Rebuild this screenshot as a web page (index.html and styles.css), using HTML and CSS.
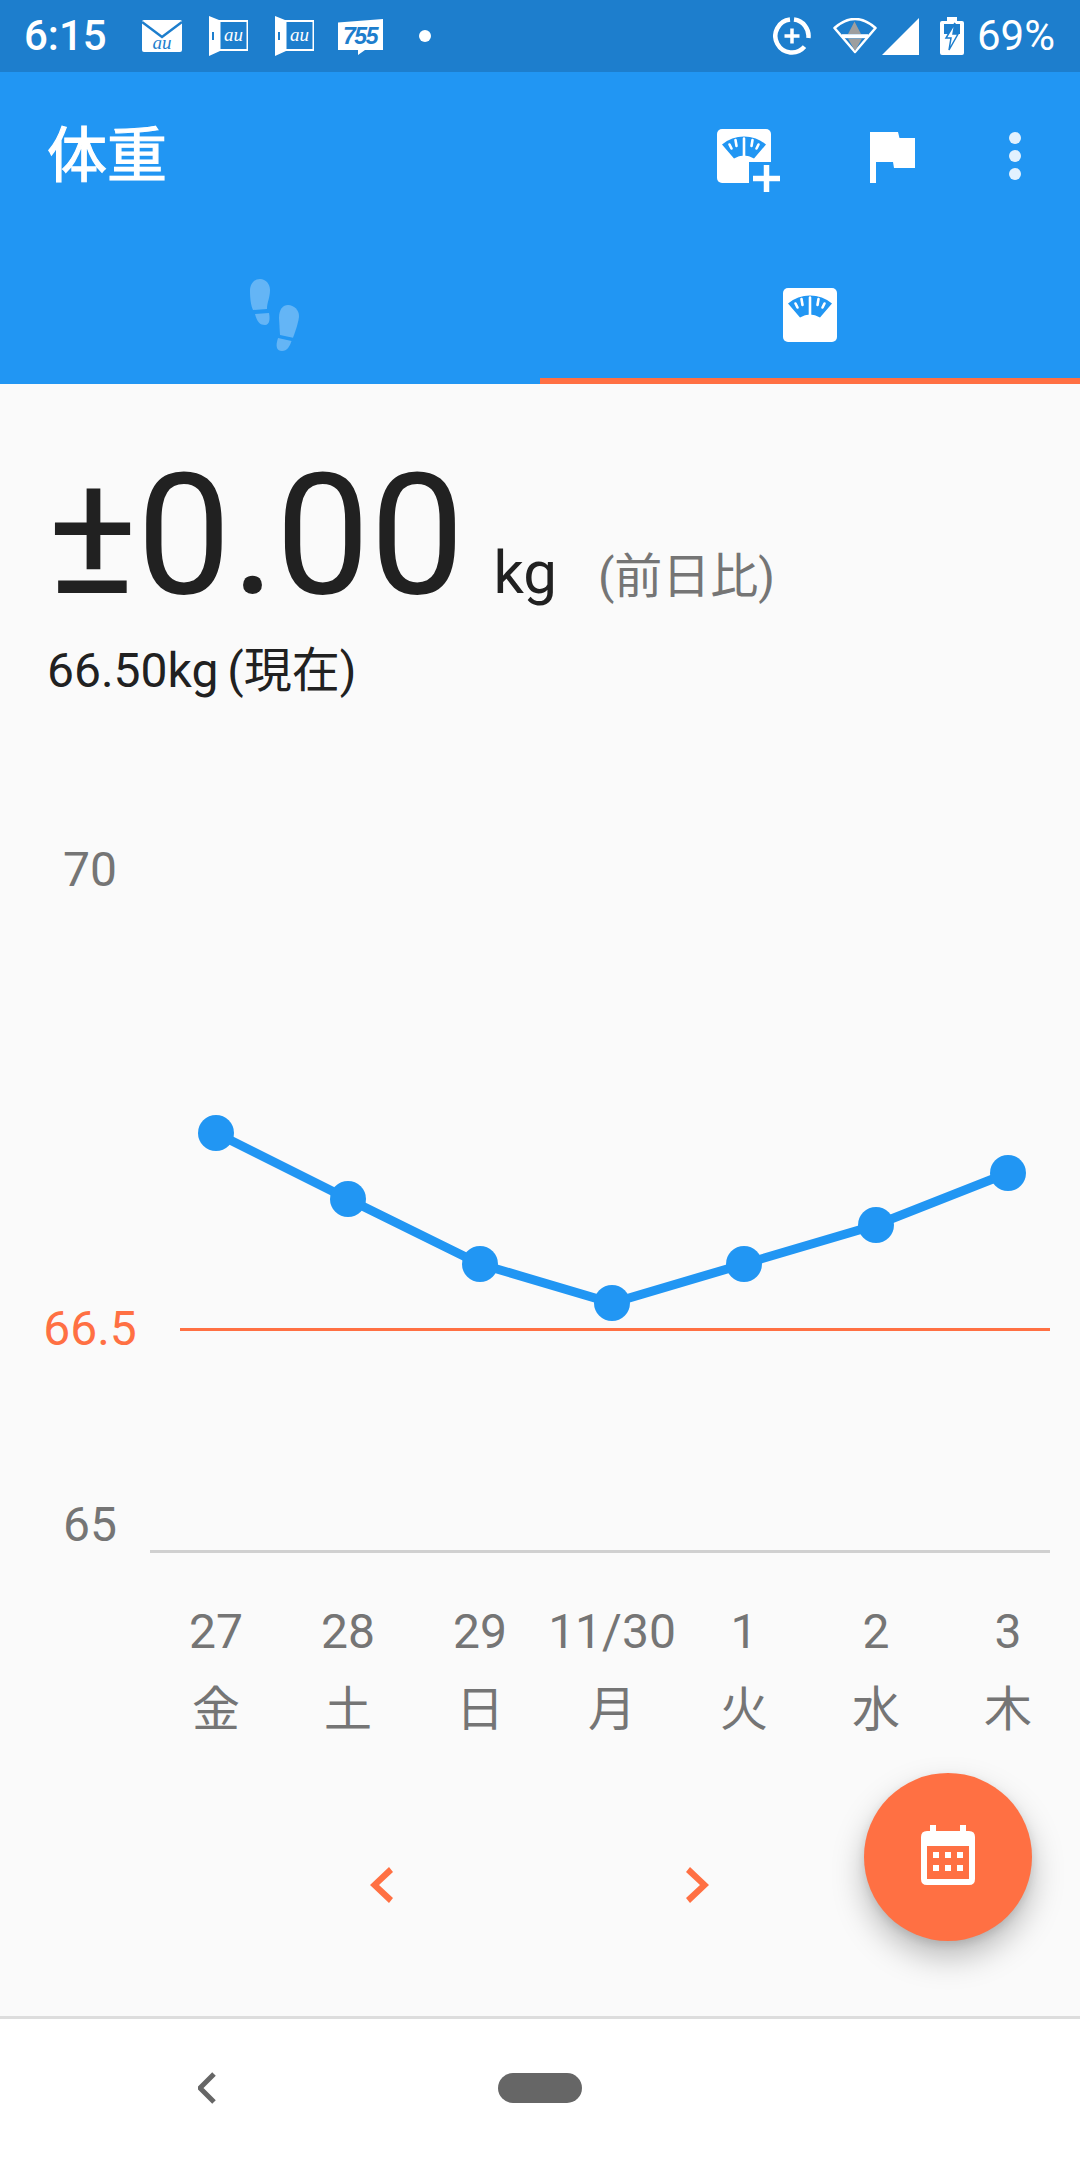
FILE: index.html
```html
<!DOCTYPE html>
<html lang="ja">
<head>
  <meta charset="UTF-8" />
  <meta name="viewport" content="width=device-width, initial-scale=1.0"/>
  <title>体重</title>
  <link rel="stylesheet" href="styles.css">
</head>
<body>
  <svg class="defs" width="0" height="0">
    <symbol id="scale" viewBox="0 0 54 54">
      <rect width="54" height="54" rx="5" fill="#fff"/>
      <path d="M5 15.5 A34 34 0 0 1 49 15.5 L37 29.5 A20 20 0 0 0 17 29.5 Z" fill="#2196f3"/>
      <path d="M27 9.5 V27 M12.5 15.5 L14.5 19.5 M18.5 11 L19.5 17 M41.5 15.5 L39.5 19.5 M35.5 11 L34.5 17" stroke="#fff" stroke-width="2.6" stroke-linecap="round" fill="none"/>
    </symbol>
    <symbol id="door" viewBox="0 0 39 40">
      <path d="M0 0 L10 4 H39 V35 H11 L0 40 Z" fill="#fff"/>
      <rect x="11.5" y="6" width="26" height="27" fill="#1d7ecd"/>
      <rect x="3" y="16" width="2" height="8" fill="#1d7ecd"/>
    </symbol>
  </svg>

  <header class="statusbar">
    <div class="status-group">
      <span class="time">6:15</span>
      <svg class="ic-mail" width="40" height="32" viewBox="0 0 40 32">
        <rect width="40" height="32" rx="2" fill="#fff"/>
        <path d="M0 2 L20 17 L40 2" stroke="#1d7ecd" stroke-width="2.5" fill="none"/>
        <text x="20" y="29" class="au-text" fill="#1d7ecd">au</text>
      </svg>
      <svg class="ic-door" width="39" height="40">
        <use href="#door"/>
        <text x="24.5" y="25" class="au-text" fill="#fff">au</text>
      </svg>
      <svg class="ic-door" width="39" height="40">
        <use href="#door"/>
        <text x="24.5" y="25" class="au-text" fill="#fff">au</text>
      </svg>
      <svg class="ic-755" width="45" height="36" viewBox="0 0 45 36">
        <path d="M0 3.5 L45 0 V31 H27 L20 36 V31 H0 Z" fill="#fff"/>
        <text x="22" y="25" class="num-text" fill="#1d7ecd">755</text>
      </svg>
      <span class="status-dot"></span>
    </div>
    <div class="status-group">
      <svg width="38" height="38" viewBox="0 0 38 38">
        <path d="M21 2.6 A16.5 16.5 0 0 1 35.4 21 M31.5 29.6 A16.5 16.5 0 1 1 17 2.6" stroke="#fff" stroke-width="4.5" fill="none"/>
        <path d="M19 11.5 V26.5 M11.5 19 H26.5" stroke="#fff" stroke-width="3.5" fill="none"/>
      </svg>
      <svg class="ic-wifi" width="44" height="36" viewBox="0 0 44 36">
        <path d="M1.5 10 Q22 -8 42.5 10 L22 34 Z" fill="#1d7ecd" stroke="#fff" stroke-width="2.5" stroke-linejoin="round"/>
        <path d="M21.5 3.5 L15 16 H28 Z M15 20.5 H29 L22 33 Z" fill="#9e9e9e"/>
        <path d="M9 18.2 H35" stroke="#fff" stroke-width="4"/>
      </svg>
      <svg class="ic-signal" width="37" height="37" viewBox="0 0 37 37"><path d="M37 0 V37 H0 Z" fill="#fff"/></svg>
      <svg class="ic-battery" width="24" height="38" viewBox="0 0 24 38">
        <path d="M7 0 H17 V4 H22 Q24 4 24 6 V36 Q24 38 22 38 H2 Q0 38 0 36 V6 Q0 4 2 4 H7 Z" fill="#fff"/>
        <rect x="4" y="7" width="16" height="10" fill="#1d7ecd"/>
        <path d="M15 6 L6 21 H11 L9 33 L18 17 H13 Z" fill="#fff" stroke="#1d7ecd" stroke-width="1.5"/>
      </svg>
      <span class="battery-pct">69%</span>
    </div>
  </header>

  <div class="toolbar">
    <h1 class="title">体重</h1>
    <svg class="act-add" width="63" height="63" viewBox="0 0 63 63">
      <use href="#scale" width="54" height="54"/>
      <rect x="32" y="33" width="31" height="30" fill="#2196f3"/>
      <path d="M36 49.5 H63 M49.5 36 V63" stroke="#fff" stroke-width="5.5" fill="none"/>
    </svg>
    <svg class="act-flag" width="45" height="51" viewBox="0 0 45 51">
      <path d="M0 0 H28 L29.5 6 H45 V36 H24 L23 30 H6 V51 H0 Z" fill="#fff"/>
    </svg>
    <svg class="act-more" width="12" height="48" viewBox="0 0 12 48">
      <circle cx="6" cy="6" r="6"/><circle cx="6" cy="24" r="6"/><circle cx="6" cy="42" r="6"/>
    </svg>
  </div>

  <nav class="tabs">
    <div class="tab">
      <svg class="foot" width="50" height="72" viewBox="250 279 50 72">
        <path d="M260 279 C254 279 250 284 250 291 C250 299 251 306 253 310 L267 309 C267 302 270 298 270 290 C270 284 266 279 260 279 Z"/>
        <path d="M255 314 L269 313 C270 318 270 325 265 325 C260 325 257 322 255 314 Z"/>
        <path d="M288 305 C283 305 279 309 279 318 L280 335 L293 337.7 C296 330 299 320 299 316 C299 310 294 305 288 305 Z"/>
        <path d="M278 338 L291.5 341 C290 346 287 351 282 351 C277 351 275 347 278 338 Z"/>
      </svg>
    </div>
    <div class="tab active">
      <svg width="54" height="54"><use href="#scale"/></svg>
    </div>
  </nav>

  <main class="content">
    <section class="summary">
      <div class="diff-row">
        <span class="diff">±0.00</span>
        <span class="unit">kg</span>
        <span class="diff-note">(前日比)</span>
      </div>
      <p class="current">66.50kg (現在)</p>
    </section>

    <svg class="chart" width="1080" height="830" viewBox="0 740 1080 830">
      <text x="90" y="886" class="axis">70</text>
      <text x="90" y="1345" class="axis now">66.5</text>
      <text x="90" y="1541" class="axis">65</text>
      <line x1="150" y1="1551.5" x2="1050" y2="1551.5" class="base"/>
      <line x1="180" y1="1329.5" x2="1050" y2="1329.5" class="goal"/>
      <polyline class="trend" points="216,1133 348,1199 480,1264 612,1303 744,1264 876,1225 1008,1173"/>
      <g class="pts">
        <circle cx="216" cy="1133" r="18"/>
        <circle cx="348" cy="1199" r="18"/>
        <circle cx="480" cy="1264" r="18"/>
        <circle cx="612" cy="1303" r="18"/>
        <circle cx="744" cy="1264" r="18"/>
        <circle cx="876" cy="1225" r="18"/>
        <circle cx="1008" cy="1173" r="18"/>
      </g>
    </svg>

    <ul class="days">
      <li>27<span>金</span></li>
      <li>28<span>土</span></li>
      <li>29<span>日</span></li>
      <li>11/30<span>月</span></li>
      <li>1<span>火</span></li>
      <li>2<span>水</span></li>
      <li>3<span>木</span></li>
    </ul>

    <div class="pager">
      <svg width="23" height="36" viewBox="0 0 23 36"><path d="M19 0 L23 5 L9 18 L23 31 L19 36 L0 18 Z"/></svg>
      <svg width="23" height="36" viewBox="0 0 23 36"><path d="M4 0 L0 5 L14 18 L0 31 L4 36 L23 18 Z"/></svg>
    </div>
  </main>

  <button class="fab" aria-label="calendar">
    <svg width="54" height="60" viewBox="0 0 54 60">
      <path d="M9 0 H15 V6 H39 V0 H45 V6 H48 Q54 6 54 12 V54 Q54 60 48 60 H6 Q0 60 0 54 V12 Q0 6 6 6 H9 Z" fill="#fff"/>
      <rect x="6" y="21" width="42" height="33" fill="#ff7043"/>
      <path d="M12 27 h6 v6 h-6 z M24 27 h6 v6 h-6 z M36 27 h6 v6 h-6 z M12 40 h6 v6 h-6 z M24 40 h6 v6 h-6 z M36 40 h6 v6 h-6 z" fill="#fff"/>
    </svg>
  </button>

  <footer class="navbar">
    <svg width="18" height="32" viewBox="0 0 18 32"><path d="M16 2 L2 16 L16 30" stroke="#666" stroke-width="5" fill="none"/></svg>
    <span class="home-pill"></span>
  </footer>
</body>
</html>
```

FILE: styles.css
```css
* { box-sizing: border-box; }
html, body { margin: 0; padding: 0; }
body { position: relative; width: 1080px; height: 2160px; overflow: hidden; background: #fafafa; font-family: Roboto, "Noto Sans CJK JP", sans-serif; }
.defs { position: absolute; }

.statusbar { height: 72px; background: #1d7ecd; color: #fff; display: flex; justify-content: space-between; align-items: center; padding: 0 25px 0 24px; }
.status-group { display: flex; align-items: center; }
.time, .battery-pct { font-size: 42px; line-height: 48px; }
.time { font-weight: 500; }
.ic-mail { margin-left: 35px; }
.ic-door { margin-left: 27px; }
.ic-755 { margin-left: 24px; margin-top: 2px; }
.status-dot { width: 12px; height: 12px; border-radius: 50%; background: #fff; margin-left: 36px; }
.ic-wifi { margin-left: 22px; }
.ic-signal { margin-left: 5px; }
.ic-battery { margin-left: 21px; }
.battery-pct { margin-left: 13px; }
.au-text { font: italic 19px "Liberation Serif", serif; text-anchor: middle; }
.num-text { font: italic 700 23px "Liberation Sans", sans-serif; letter-spacing: -1.5px; text-anchor: middle; }

.toolbar { height: 168px; background: #2196f3; display: flex; align-items: center; padding: 2px 59px 0 47px; }
.title { flex: 1; margin: 0; color: #fff; font-size: 60px; line-height: 80px; font-weight: 400; -webkit-text-stroke: 1.2px #fff; }
.act-add { margin-top: 7px; }
.act-flag { margin-left: 90px; margin-top: 1px; }
.act-more { margin-left: 94px; margin-top: -2px; fill: #fff; fill-opacity: .87; }

.tabs { height: 144px; background: #2196f3; display: flex; }
.tab { flex: 1; display: flex; align-items: center; justify-content: center; padding-top: 6px; }
.tab.active { box-shadow: inset 0 -6px 0 #ff7043; }
.foot { margin-left: 9px; fill: #fff; fill-opacity: .3; }

.content { height: 1635px; display: flex; flex-direction: column; border-bottom: 3px solid #ddd; }
.summary { height: 356px; padding: 68px 0 0 47px; }
.diff-row { display: flex; align-items: baseline; height: 168px; }
.diff { font-size: 168px; line-height: 168px; color: #212121; }
.unit { font-size: 60px; line-height: 60px; color: #212121; margin-left: 29px; }
.diff-note { font-size: 48px; line-height: 60px; color: #757575; margin-left: 41px; }
.current { margin: 19px 0 0; font-size: 48px; line-height: 64px; color: #212121; word-spacing: -3px; }

.chart { display: block; flex: none; }
.axis { font-size: 48px; fill: #757575; text-anchor: middle; }
.axis.now { fill: #ff7043; }
.base { stroke: #d0d0d0; stroke-width: 3; }
.goal { stroke: #ff7043; stroke-width: 3; }
.trend { fill: none; stroke: #2196f3; stroke-width: 9; }
.pts { fill: #2196f3; }

.days { list-style: none; margin: 30px 0 0; padding: 0 6px 0 150px; display: grid; grid-template-columns: repeat(7, 132px); font-size: 48px; line-height: 64px; color: #757575; text-align: center; }
.days li { white-space: nowrap; }
.days span { display: block; margin-top: 14px; }

.pager { display: flex; justify-content: center; gap: 293px; margin-top: 125px; padding-right: 1px; fill: #ff7043; }

.fab { position: absolute; left: 864px; top: 1773px; width: 168px; height: 168px; border: 0; padding: 0 0 4px; border-radius: 50%; background: #ff7043; display: flex; align-items: center; justify-content: center; box-shadow: 0 16px 32px rgba(0,0,0,.26), 0 4px 10px rgba(0,0,0,.1); }

.navbar { height: 141px; background: #fff; display: flex; align-items: center; padding: 0 0 3px 198px; }
.home-pill { width: 84px; height: 30px; border-radius: 15px; background: #666; margin-left: 282px; }
```
